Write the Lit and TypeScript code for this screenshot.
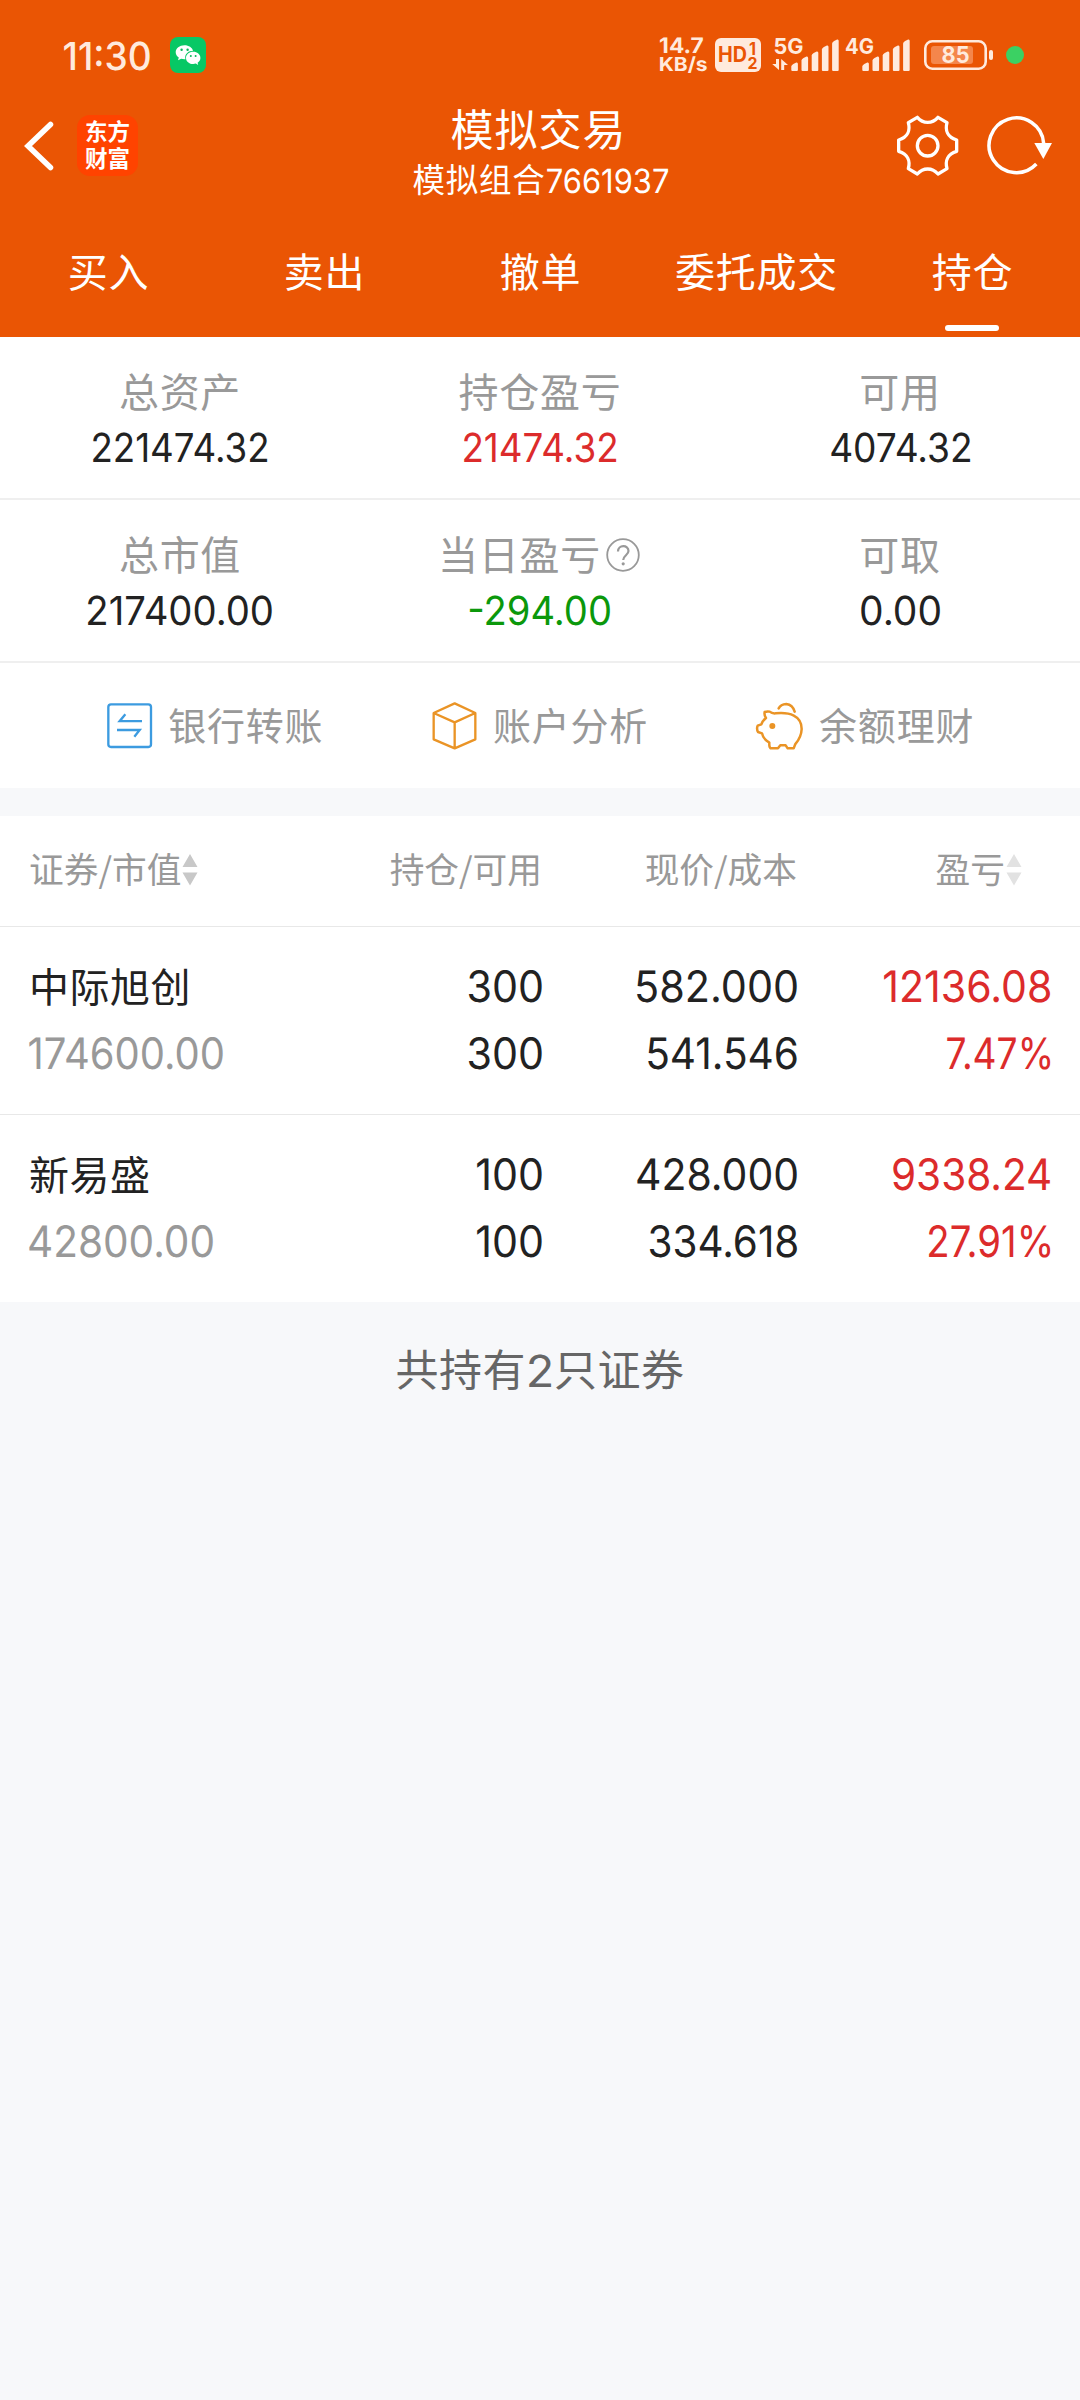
import { LitElement, html, css, svg } from "lit";
import { customElement, property } from "lit/decorators.js";

const canvas = document.createElement("canvas");
const ctx = canvas.getContext("2d")!;

/* Latin text fitted to an exact ink width and digit height. */
@customElement("ink-text")
class InkText extends LitElement {
  @property() text = "";
  @property({ type: Number }) w = 100;
  @property({ type: Number }) h = 30;
  @property({ type: Number }) weight = 430;

  static styles = css`
    :host { display: inline-block; flex: none; letter-spacing: 0; }
    svg { display: block; overflow: visible; }
    text { font-family: Inter, "Liberation Sans", sans-serif; fill: currentColor; text-rendering: geometricPrecision; }
  `;

  render() {
    const family = 'Inter, "Liberation Sans", sans-serif';
    ctx.font = `${this.weight} 100px ${family}`;
    const zero = ctx.measureText("0");
    const digit = zero.actualBoundingBoxAscent + zero.actualBoundingBoxDescent;
    const size = (this.h / digit) * 100;
    const k = size / 100;
    const m = ctx.measureText(this.text);
    const left = -m.actualBoundingBoxLeft * k;
    const ink = (m.actualBoundingBoxRight + m.actualBoundingBoxLeft) * k;
    const sx = this.w / ink;
    const base = zero.actualBoundingBoxAscent * k;
    return html`<svg width=${this.w} height=${this.h}>
      <text transform="translate(${-left * sx} ${base}) scale(${sx} 1)" font-size=${size} font-weight=${this.weight}>${this.text}</text>
    </svg>`;
  }
}

type Num = [string, number];

const TABS = ["买入", "卖出", "撤单", "委托成交", "持仓"];

const SUMMARY: { label: string; value: Num; tone?: string; help?: boolean }[][] = [
  [
    { label: "总资产", value: ["221474.32", 174] },
    { label: "持仓盈亏", value: ["21474.32", 152], tone: "up" },
    { label: "可用", value: ["4074.32", 139] },
  ],
  [
    { label: "总市值", value: ["217400.00", 184] },
    { label: "当日盈亏", value: ["-294.00", 140], tone: "down", help: true },
    { label: "可取", value: ["0.00", 79] },
  ],
];

const HOLDINGS: { name: string; lines: Num[][] }[] = [
  {
    name: "中际旭创",
    lines: [
      [["300", 73], ["582.000", 160], ["12136.08", 166]],
      [["174600.00", 194], ["300", 73], ["541.546", 149], ["7.47%", 103]],
    ],
  },
  {
    name: "新易盛",
    lines: [
      [["100", 65], ["428.000", 160], ["9338.24", 157]],
      [["42800.00", 184], ["100", 65], ["334.618", 147], ["27.91%", 121]],
    ],
  },
];

const bars = (x: number) => {
  const tops = [26, 20, 15, 9, 3];
  return tops.map((t, i) => {
    const l = x + i * 10.2;
    return svg`<path d="M${l} ${t + 3.5} Q${l} ${t + 2} ${l + 2} ${t + 1} L${l + 5} ${t - 0.5} Q${l + 6.6} ${t - 1} ${l + 6.6} ${t + 1} V33 Q${l + 6.6} 34 ${l + 5.6} 34 H${l + 1} Q${l} 34 ${l} 33Z"/>`;
  });
};

const sortIcon = (cls: string) => html`<svg class="sort ${cls}" width="16" height="32" viewBox="0 0 16 32">
  <path d="M8 0 L15.5 13 H0.5Z M0.5 18.5 H15.5 L8 31.5Z" />
</svg>`;

@customElement("app-root")
class AppRoot extends LitElement {
  static styles = css`
    :host {
      display: block; width: 1080px; height: 2400px; background: #f7f8fa; color: #222; overflow: hidden;
      font-family: "Noto Sans CJK SC", sans-serif;
    }
    * { box-sizing: border-box; }
    svg { display: block; flex: none; overflow: visible; }
    .header { background: #ea5504; color: #fff; height: 337px; }
    .status { display: flex; padding: 37px 56px 0 64px; height: 101px; align-items: flex-start; color: #ffeadd; }
    .status .time { margin-top: 4px; }
    .wechat { margin-left: 20px; }
    .sys { margin-left: auto; display: flex; fill: #ffeadd; }
    .sys text { font-family: Inter, "Liberation Sans", sans-serif; font-weight: 700; }
    .rate { display: flex; flex-direction: column; gap: 3.5px; width: 55px; }
    .nav { display: grid; grid-template-columns: 1fr auto 1fr; height: 100px; }
    .left { display: flex; align-items: center; padding: 0 0 11px 23px; gap: 24px; }
    .logo {
      width: 61px; height: 61px; border-radius: 13px; background: #ff4300; display: flex; flex-direction: column;
      align-items: center; padding-top: 2px; font-size: 22.5px; line-height: 27px; font-weight: 700;
    }
    .title { display: flex; flex-direction: column; align-items: center; gap: 2px; }
    .title .main { font-size: 43px; line-height: 52px; letter-spacing: 1px; margin-right: 3px; }
    .title .sub { display: flex; font-size: 32.5px; line-height: 46px; letter-spacing: 0.8px; }
    .title .sub ink-text { margin: 13px 0 0 1px; }
    .right { display: flex; justify-content: flex-end; align-items: flex-start; padding: 14px 28px 0 0; gap: 27px; }
    .tabs { display: grid; grid-template-columns: repeat(5, 216px); padding-top: 39px; }
    .tab { display: flex; flex-direction: column; align-items: center; font-size: 40px; line-height: 60px; letter-spacing: 0.8px; }
    .tab span { margin-left: 1px; }
    .tab.on::after { content: ""; width: 54px; height: 6px; border-radius: 3px; background: #fff; margin-top: 25px; }
    .panel { background: #fff; }
    .sum { display: grid; grid-template-columns: repeat(3, 1fr); height: 163px; border-bottom: 2px solid #efefef; }
    .cell { display: flex; flex-direction: column; align-items: center; padding-top: 28px; }
    .label { display: flex; align-items: center; height: 50px; font-size: 40px; line-height: 50px; letter-spacing: 0.7px; color: #999; margin-bottom: 16.5px; }
    .label svg { margin: 4px 2px 0 5px; }
    .up { color: #dc2b2b; }
    .down { color: #0b980b; }
    .actions { display: grid; grid-template-columns: repeat(3, 1fr); padding: 0 53px; height: 125px; }
    .action { display: flex; align-items: center; justify-content: center; gap: 16px; color: #999; font-size: 38px; letter-spacing: 0.8px; line-height: 50px; }
    .action span { margin-top: -4px; }
    .table { margin-top: 28px; }
    .row { display: grid; grid-template-columns: 263px 250px 255px 1fr; padding: 0 30px 0 29px; border-bottom: 1px solid #e8e8e8; }
    .row > * { justify-self: end; }
    .row > .l { justify-self: start; }
    .head { height: 111px; padding-top: 27px; color: #999; font-size: 34.7px; line-height: 50px; align-items: start; }
    .head > * { display: flex; align-items: center; height: 50px; }
    .head .last { padding-right: 28px; }
    .sort { margin: 4px 0 0 1px; }
    .sort.dark { fill: #c8c8c8; }
    .sort.light { fill: #e2e2e2; }
    .hold { height: 188px; padding-top: 39px; grid-template-rows: 40px 40px; row-gap: 27px; align-items: center; }
    .hold:last-child { border: 0; height: 187px; }
    .name { font-size: 40px; line-height: 40px; letter-spacing: 0.5px; margin-top: -3px; }
    .gray { color: #999; }
    .foot { display: flex; justify-content: center; padding-top: 35px; font-size: 43px; line-height: 60px; letter-spacing: 0.5px; color: #666; }
    .foot ink-text { margin: 17px 3px 0 3px; }
  `;

  private statusBar() {
    return html`<div class="status">
      <ink-text class="time" text="11:30" w="86" h="29" weight="500"></ink-text>
      <svg class="wechat" width="36" height="36" viewBox="0 0 36 36">
        <rect width="36" height="36" rx="8" fill="#07c865" />
        <path d="M14.5 8.2c-4.9 0-8.8 3.1-8.8 7 0 2.200 1.200 4.100 3.100 5.400l-.8 2.700 3.200-1.600c1 .3 2.100.5 3.300.5l1 0c-.2-.7-.3-1.200-.3-1.800 0-3.700 3.500-6.600 7.900-6.600-.8-3.300-4.300-5.600-8.600-5.600z" fill="#fff" />
        <path d="M23.200 14.800c-4 0-7.200 2.700-7.200 6.100s3.200 6.100 7.200 6.100c.9 0 1.800-.1 2.600-.4l2.400 1.300-.6-2.200c1.700-1.100 2.800-2.800 2.800-4.800 0-3.400-3.200-6.100-7.200-6.100z" fill="#fff" />
        <g fill="#07b85a"><circle cx="11.600" cy="12.800" r="1.200" /><circle cx="17.600" cy="12.800" r="1.200" /><circle cx="20.800" cy="19" r="1" /><circle cx="25.600" cy="19" r="1" /></g>
      </svg>
      <div class="sys">
        <div class="rate">
          <ink-text text="14.7" w="43" h="16" weight="700"></ink-text>
          <ink-text text="KB/s" w="47" h="14.5" weight="700"></ink-text>
        </div>
        <svg width="57" height="36">
          <rect x="0" y="1" width="46" height="34" rx="6" />
          <g fill="#ea5504">
            <text x="3" y="25" font-size="21" textLength="29" lengthAdjust="spacingAndGlyphs">HD</text>
            <text x="34" y="17.500" font-size="17" textLength="7" lengthAdjust="spacingAndGlyphs">1</text>
            <text x="32.500" y="32" font-size="16" textLength="10" lengthAdjust="spacingAndGlyphs">2</text>
          </g>
        </svg>
        <svg width="73" height="36">
          <text x="1.500" y="16.500" font-size="21.500" textLength="30" lengthAdjust="spacingAndGlyphs">5G</text>
          <path d="M4 22 H7 V33 L0.200 27 H4Z M9.200 33 V22 L16 28 H12.200 V33Z" />
          ${bars(19.300)}
        </svg>
        <svg width="79" height="36">
          <text x="0" y="16.500" font-size="21.500" textLength="29" lengthAdjust="spacingAndGlyphs">4G</text>
          ${bars(17.300)}
        </svg>
        <svg width="82" height="36">
          <rect x="1.300" y="4.300" width="60.400" height="27.400" rx="7" fill="none" stroke="#ffeadd" stroke-width="2.600" />
          <rect x="7" y="9" width="42" height="18" rx="3" fill="#f4864c" />
          <rect x="65" y="13" width="4" height="10" rx="2" />
          <text x="17.500" y="26" font-size="23" textLength="28" lengthAdjust="spacingAndGlyphs">85</text>
        </svg>
        <svg width="18" height="36"><circle cx="9" cy="18" r="9" fill="#3bd163" /></svg>
      </div>
    </div>`;
  }

  private nav() {
    return html`<div class="nav">
      <div class="left">
        <svg width="30" height="50" viewBox="0 0 30 50" fill="none" stroke="#fff" stroke-width="5.500" stroke-linecap="round"><path d="M27.500 3.500 L5 25 L27.500 46.500" /></svg>
        <div class="logo"><span>东方</span><span>财富</span></div>
      </div>
      <div class="title">
        <div class="main">模拟交易</div>
        <div class="sub">模拟组合<ink-text text="7661937" w="121" h="25"></ink-text></div>
      </div>
      <div class="right">
        <svg width="63" height="62" viewBox="108 75 189 186" fill="none" stroke="#fff" stroke-width="10" stroke-linejoin="round">
          <path d="M172 82 Q185 97 203 97 Q221 97 234 82 L261 98 C255 120 262 142 290 150 V184 C262 192 255 214 261 236 L234 252 Q221 237 203 237 Q185 237 172 252 L145 236 C151 214 144 192 116 184 V150 C144 142 151 120 145 98Z" />
          <circle cx="203" cy="167" r="31" />
        </svg>
        <svg width="66" height="62" viewBox="378 75 198 186" fill="none">
          <path d="M551 160 A82 82 0 1 0 529 222" stroke="#fff" stroke-width="10.500" />
          <path d="M523 159 H576 L550 207Z" fill="#fff" />
        </svg>
      </div>
    </div>`;
  }

  private actions() {
    return html`<div class="actions">
      <div class="action">
        <svg width="45" height="46" viewBox="54 69 135 138" fill="none" stroke="#3c9be0" stroke-width="7">
          <rect x="58" y="73" width="128" height="128" rx="8" />
          <path d="M159 123.500 H92 L109 103 M84 150 H152 L136 170" />
        </svg>
        <span>银行转账</span>
      </div>
      <div class="action">
        <svg width="45" height="48" viewBox="1029 65 135 144" fill="none" stroke="#ea9426" stroke-width="7" stroke-linejoin="round">
          <path d="M1097 69 L1159 98 V177 L1097 204 L1034 177 V98Z M1034 98 L1097 126 L1159 98 M1097 126 V204" />
        </svg>
        <span>账户分析</span>
      </div>
      <div class="action">
        <svg width="48" height="48" viewBox="75 64 144 144" fill="none" stroke="#ea9426" stroke-width="7.500" stroke-linejoin="round" stroke-linecap="round">
          <path d="M104 94 Q112 91 119 93 Q126 99 137 98 C178 94 215 104 215 145 C214 170 203 182 196 190 L191 203 H173 L167 194 H151 L144 203 H122 Q117 200 118 186 Q100 176 96 158 L84 154 Q79 144 83 135 L94 131 Q98 120 108 112 Q102 104 104 94Z M146 83 Q152 71 169 70 Q188 72 194 93" />
          <circle cx="127" cy="136" r="9" fill="#ea9426" stroke="none" />
        </svg>
        <span>余额理财</span>
      </div>
    </div>`;
  }

  render() {
    return html`
      <div class="header">
        ${this.statusBar()} ${this.nav()}
        <div class="tabs">${TABS.map((t, i) => html`<div class="tab ${i === 4 ? "on" : ""}"><span>${t}</span></div>`)}</div>
      </div>
      <div class="panel">
        ${SUMMARY.map((r) => html`<div class="sum">${r.map((c) => html`<div class="cell">
          <div class="label">${c.label}${c.help
            ? html`<svg width="34" height="34" viewBox="0 0 34 34" fill="none" stroke="#999" stroke-width="1.800">
                <circle cx="17" cy="17" r="15.800" />
                <path d="M12 13.500 C12 6.500 22.500 6.500 22.500 13 C22.500 17 17.200 17.500 17.200 22" stroke-width="2.200" />
                <circle cx="17.200" cy="25.800" r="1.600" fill="#999" stroke="none" />
              </svg>`
            : ""}</div>
          <ink-text class=${c.tone ?? ""} text=${c.value[0]} w=${c.value[1]} h="30"></ink-text>
        </div>`)}</div>`)}
        ${this.actions()}
      </div>
      <div class="panel table">
        <div class="row head">
          <div class="l">证券/市值${sortIcon("dark")}</div>
          <div>持仓/可用</div>
          <div>现价/成本</div>
          <div class="last">盈亏${sortIcon("light")}</div>
        </div>
        ${HOLDINGS.map((s) => html`<div class="row hold">
          <div class="l name">${s.name}</div>
          ${s.lines[0].map((n, i) => html`<ink-text class=${i === 2 ? "up" : ""} text=${n[0]} w=${n[1]} h="32.5"></ink-text>`)}
          ${s.lines[1].map((n, i) => html`<ink-text class=${i === 0 ? "l gray" : i === 3 ? "up" : ""} text=${n[0]} w=${n[1]} h="32.5"></ink-text>`)}
        </div>`)}
      </div>
      <div class="foot">共持有<ink-text text="2" w="22" h="33"></ink-text>只证券</div>
    `;
  }
}
